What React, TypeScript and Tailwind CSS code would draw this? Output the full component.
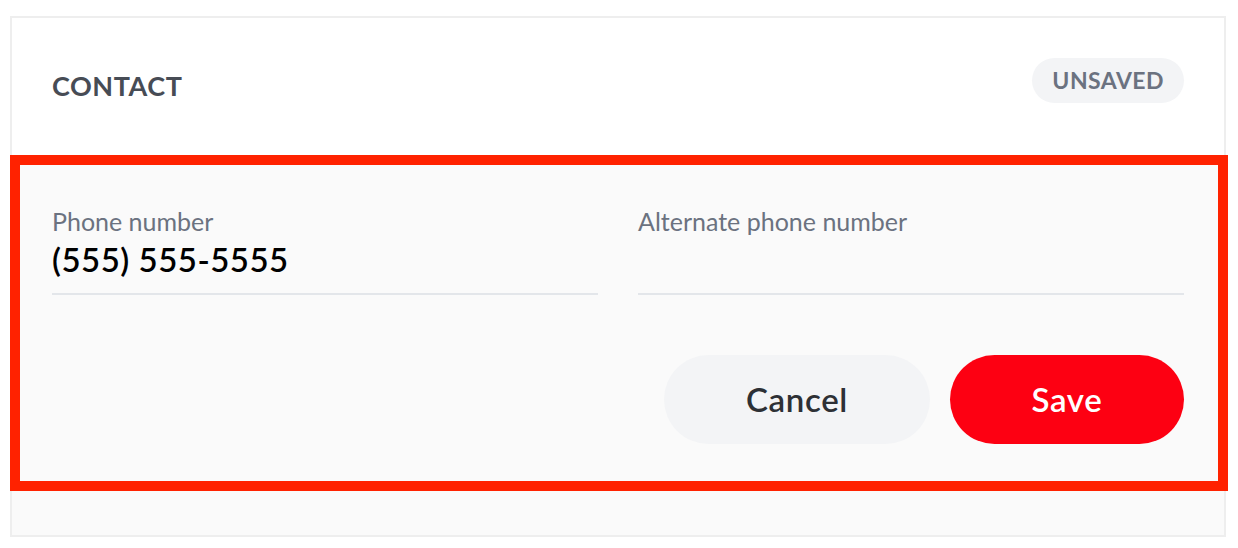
export default function App() {
  return (
    <div className="min-h-screen bg-white pl-[10px] pt-[16px] font-['Lato',sans-serif]">
      <div className="w-[1216px] border-2 border-[#eeeeee] bg-white">
        {/* Header */}
        <div className="flex h-[137px] items-center justify-between px-[40px]">
          <h2 className="text-[27px] font-bold tracking-[0.02em] text-[#474c55]">CONTACT</h2>
          <span className="mb-[12px] flex h-[45px] items-center rounded-full bg-[#f3f4f6] px-[20px] text-[23px] font-bold tracking-[0.02em] text-[#6b7280]">
            UNSAVED
          </span>
        </div>

        {/* Form section */}
        <div className="bg-[#fafafa] pb-[44px]">
          <div className="-ml-[2px] -mr-[4px] border-[10px] border-[#ff2200] pb-[37px] pl-[32px] pr-[34px] pt-[41px]">
            <div className="grid grid-cols-2 gap-[40px]">
              <div className="border-b-2 border-[#e3e6ea] pb-[14px]">
                <div className="text-[25px] leading-[30px] text-[#6b7280]">Phone number</div>
                <div className="mt-[3px] h-[40px] text-[33px] font-semibold leading-[40px] tracking-[0.015em] text-black">(555) 555-5555</div>
              </div>
              <div className="border-b-2 border-[#e3e6ea] pb-[14px]">
                <div className="text-[25px] leading-[30px] text-[#6b7280]">Alternate phone number</div>
                <div className="mt-[3px] h-[40px]" />
              </div>
            </div>
            <div className="mt-[60px] flex justify-end gap-[20px]">
              <button className="flex h-[89px] w-[266px] items-center justify-center rounded-full bg-[#f3f4f6] text-[33px] font-semibold tracking-[0.02em] text-[#2d3035]">
                Cancel
              </button>
              <button className="flex h-[89px] w-[234px] items-center justify-center rounded-full bg-[#fd0012] text-[33px] font-semibold tracking-[0.02em] text-white">
                Save
              </button>
            </div>
          </div>
        </div>
      </div>
    </div>
  )
}
